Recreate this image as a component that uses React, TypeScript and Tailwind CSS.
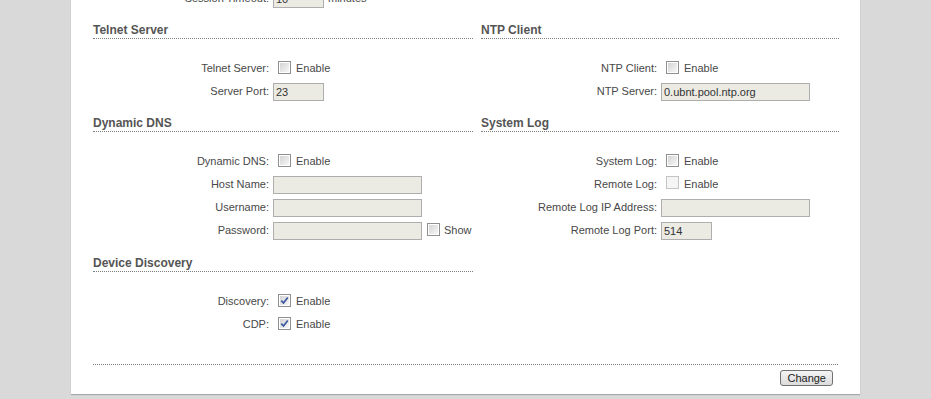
import React from 'react';

// Services page (scrolled), two-column settings form
const Check = ({ checked = false, disabled = false }: { checked?: boolean; disabled?: boolean }) => (
    <span
        className={
            disabled
                ? 'inline-flex h-[13px] w-[13px] shrink-0 items-center justify-center border border-[#c4c4c4] bg-[#f5f5f5]'
                : 'inline-flex h-[13px] w-[13px] shrink-0 items-center justify-center border border-[#8e8f8f] bg-white p-[1px]'
        }
    >
        {!disabled && (
            <span className="relative flex h-full w-full items-center justify-center bg-linear-to-br from-[#d4d4d4] to-[#f7f7f7]">
                {checked && (
                    <svg width="9" height="9" viewBox="0 0 9 9" className="absolute">
                        <path d="M1.3 4.6 L3.5 7 L7.8 1.4" fill="none" stroke="#3b57a0" strokeWidth="1.7" />
                    </svg>
                )}
            </span>
        )}
    </span>
);

const Row = ({ label, children }: { label: string; children: React.ReactNode }) => (
    <div className="flex h-[23px] items-center">
        <div className="w-[180px] shrink-0 pr-[4px] text-right">{label}</div>
        <div className="flex items-center">{children}</div>
    </div>
);

const Enable = ({ checked, disabled }: { checked?: boolean; disabled?: boolean }) => (
    <>
        <span className="ml-[5px]"><Check checked={checked} disabled={disabled} /></span>
        <span className="ml-[5px]">Enable</span>
    </>
);

const Field = ({ value = '', wide = false }: { value?: string; wide?: boolean }) => (
    <input
        readOnly
        defaultValue={value}
        className={
            wide
                ? 'h-[18px] w-[149px] border border-[#aeaeae] bg-[#ebebe4] px-[2px] text-[11px] text-[#333] outline-none'
                : 'h-[18px] w-[51px] border border-[#aeaeae] bg-[#ebebe4] px-[2px] text-[11px] text-[#333] outline-none'
        }
    />
);

const Section = ({ title, children }: { title: string; children?: React.ReactNode }) => (
    <div>
        <div className="border-b border-dotted border-[#7d7d7d] pb-[1px] pt-[1px] text-[12px] leading-[14px] font-bold text-[#555]">
            {title}
        </div>
        <div className="pt-[18px]">{children}</div>
    </div>
);

export default function App() {
    return (
        <div className="h-[399px] w-[931px] overflow-hidden bg-[#d9d9d9] font-['Liberation_Sans',Arial,sans-serif] text-[11px] text-[#484848]">
            <div className="ml-[71px] w-[789px] bg-white px-[22px] pb-[8px] shadow-[0_1px_1px_rgba(0,0,0,0.22)]">
                {/* Session row, cut by scroll */}
                <div className="-mt-[13px]">
                    <Row label="Session Timeout:">
                        <Field value="10" />
                        <span className="ml-[4px]">minutes</span>
                    </Row>
                </div>

                <div className="grid grid-cols-[380px_358px] gap-x-[8px] pt-[12px]">
                    <Section title="Telnet Server">
                        <Row label="Telnet Server:"><Enable /></Row>
                        <Row label="Server Port:"><Field value="23" /></Row>
                    </Section>
                    <Section title="NTP Client">
                        <Row label="NTP Client:"><Enable /></Row>
                        <Row label="NTP Server:"><Field value="0.ubnt.pool.ntp.org" wide /></Row>
                    </Section>
                </div>

                <div className="grid grid-cols-[380px_358px] gap-x-[8px] pt-[12px]">
                    <Section title="Dynamic DNS">
                        <Row label="Dynamic DNS:"><Enable /></Row>
                        <Row label="Host Name:"><Field wide /></Row>
                        <Row label="Username:"><Field wide /></Row>
                        <Row label="Password:">
                            <Field wide />
                            <span className="ml-[5px]"><Check /></span>
                            <span className="ml-[4px]">Show</span>
                        </Row>
                    </Section>
                    <Section title="System Log">
                        <Row label="System Log:"><Enable /></Row>
                        <Row label="Remote Log:"><Enable disabled /></Row>
                        <Row label="Remote Log IP Address:"><Field wide /></Row>
                        <Row label="Remote Log Port:"><Field value="514" /></Row>
                    </Section>
                </div>

                <div className="grid grid-cols-[380px_358px] gap-x-[8px] pt-[13px]">
                    <Section title="Device Discovery">
                        <Row label="Discovery:"><Enable checked /></Row>
                        <Row label="CDP:"><Enable checked /></Row>
                    </Section>
                    <div />
                </div>

                <div className="mt-[28px] border-t border-dotted border-[#7d7d7d]" />
                <div className="mt-[5px] flex justify-end pr-[5px]">
                    <button className="h-[16px] rounded-[3px] border border-[#707070] bg-linear-to-b from-[#f4f4f4] to-[#dcdcdc] px-[6px] text-[11px] leading-[14px] text-[#222]">
                        Change
                    </button>
                </div>
            </div>
        </div>
    );
}
